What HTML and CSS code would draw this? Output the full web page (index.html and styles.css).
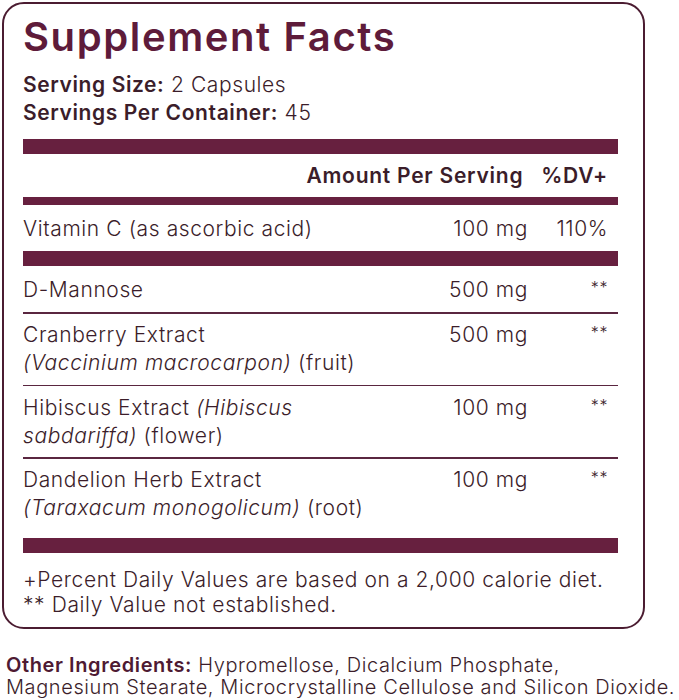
FILE: index.html
```html
<!DOCTYPE html>
<html lang="en">
<head>
<meta charset="utf-8">
<title>Supplement Facts</title>
<link rel="stylesheet" href="styles.css">
</head>
<body>
<div class="panel">
  <h1 class="title">Supplement Facts</h1>
  <div class="serving">
    <div><b>Serving Size:</b> 2 Capsules</div>
    <div><b>Servings Per Container:</b> 45</div>
  </div>
  <div class="bar bar-thick"></div>
  <div class="head-row">
    <span class="head-amount">Amount Per Serving</span>
    <span class="head-dv">%DV+</span>
  </div>
  <div class="bar bar-mid"></div>
  <div class="row row-vit">
    <span class="name">Vitamin C (as ascorbic acid)</span>
    <span class="amt">100 mg</span>
    <span class="dv">110%</span>
  </div>
  <div class="bar bar-thick"></div>
  <div class="row row-first">
    <span class="name">D-Mannose</span>
    <span class="amt">500 mg</span>
    <span class="dv star">**</span>
  </div>
  <div class="rule"></div>
  <div class="row">
    <span class="name">Cranberry Extract<br><i>(Vaccinium macrocarpon)</i> (fruit)</span>
    <span class="amt">500 mg</span>
    <span class="dv star">**</span>
  </div>
  <div class="rule"></div>
  <div class="row">
    <span class="name">Hibiscus Extract <i>(Hibiscus<br>sabdariffa)</i> (flower)</span>
    <span class="amt">100 mg</span>
    <span class="dv star">**</span>
  </div>
  <div class="rule"></div>
  <div class="row row-last">
    <span class="name">Dandelion Herb Extract<br><i>(Taraxacum monogolicum)</i> (root)</span>
    <span class="amt">100 mg</span>
    <span class="dv star">**</span>
  </div>
  <div class="bar bar-thick"></div>
  <div class="foot">
    <div>+Percent Daily Values are based on a 2,000 calorie diet.</div>
    <div>** Daily Value not established.</div>
  </div>
</div>
<p class="other"><b>Other Ingredients:</b> Hypromellose, Dicalcium Phosphate,<br>Magnesium Stearate, Microcrystalline Cellulose and Silicon Dioxide.</p>
</body>
</html>
```

FILE: styles.css
```css
html, body {
  margin: 0;
  padding: 0;
  background: #ffffff;
}
body {
  font-family: Inter, "Noto Sans", "Liberation Sans", sans-serif;
  color: #3b1d2a;
  font-size: 21px;
  font-weight: 300;
  letter-spacing: 0.6px;
  width: 679px;
}
.panel {
  margin: 2px 0 0 2px;
  width: 643px;
  box-sizing: border-box;
  border: 2px solid #4b1c31;
  border-radius: 22px;
  padding: 11px 25px 10px 19px;
}
.title {
  margin: 0;
  font-size: 40px;
  line-height: 44px;
  font-weight: 600;
  color: #5e1b3a;
  letter-spacing: 1.6px;
}
.serving {
  margin-top: 11.5px;
  line-height: 28px;
}
.serving b, .other b, .head-row {
  font-weight: 600;
}
.bar {
  background: #67203f;
}
.bar-thick {
  height: 15px;
}
.bar-mid {
  height: 8px;
}
.serving + .bar {
  margin-top: 12px;
}
.rule {
  height: 1.5px;
  background: #5a2640;
}
.head-row {
  display: flex;
  justify-content: flex-end;
  padding: 8.5px 10px 6.5px 0;
  line-height: 28px;
  letter-spacing: 0.75px;
}
.head-dv {
  margin-left: 18px;
}
.row {
  display: grid;
  grid-template-columns: 1fr auto 80px;
  padding: 7.5px 10px 7.5px 0;
  line-height: 28px;
}
.row-vit {
  padding-top: 10.5px;
  padding-bottom: 7.5px;
}
.row-first {
  padding-top: 10.5px;
  padding-bottom: 8px;
}
.row-last {
  padding-bottom: 16px;
}
.amt {
  text-align: right;
}
.dv {
  text-align: right;
}
.star {
  font-size: 16px;
  line-height: 22px;
}
.foot {
  margin-top: 14px;
  line-height: 25px;
}
.other {
  margin: 25px 0 0 6px;
  font-size: 20px;
  line-height: 22px;
  color: #3b1d2a;
  letter-spacing: 0.6px;
  white-space: nowrap;
}
.other b {
  color: #4e1a33;
}
```
